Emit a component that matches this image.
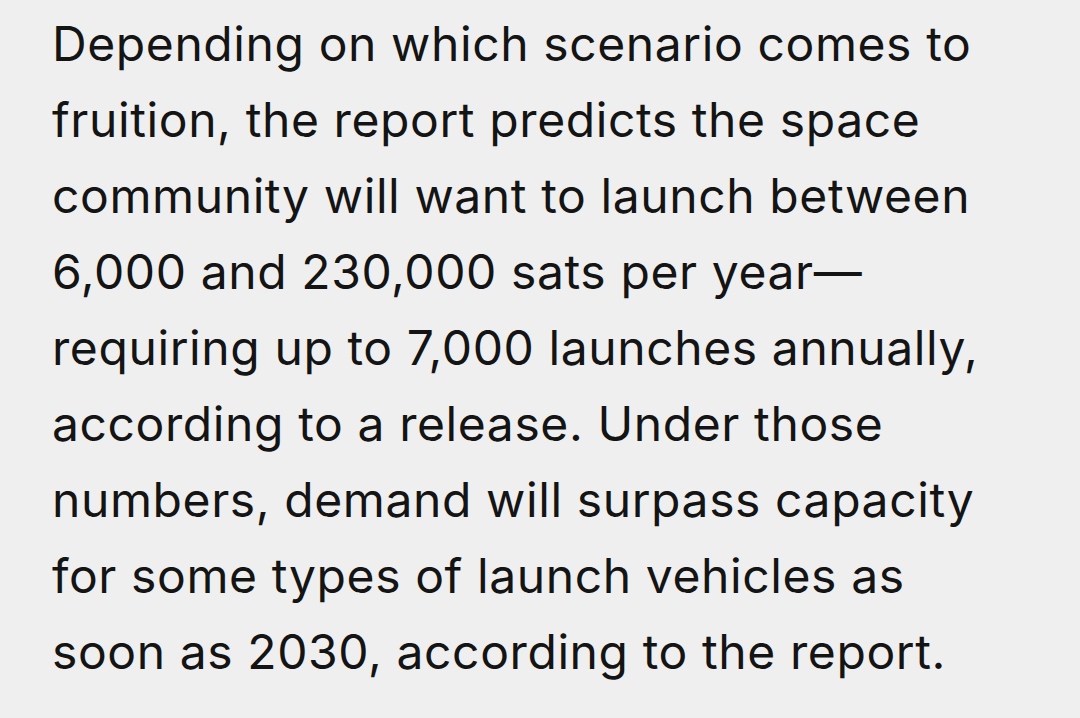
import React from "react";

const lines = [
  "Depending on which scenario comes to",
  "fruition, the report predicts the space",
  "community will want to launch between",
  "6,000 and 230,000 sats per year—",
  "requiring up to 7,000 launches annually,",
  "according to a release. Under those",
  "numbers, demand will surpass capacity",
  "for some types of launch vehicles as",
  "soon as 2030, according to the report.",
];

export default function App() {
  return (
    <div className="w-[1080px] h-[718px] bg-[#efefef] overflow-hidden">
      <p
        className="pl-[52px] pt-[6px] text-[48px] leading-[76px] tracking-[0.6px] text-[#141414]"
        style={{ fontFamily: "Inter, sans-serif" }}
      >
        {lines.map((l) => (
          <span key={l} className="block whitespace-nowrap">
            {l}
          </span>
        ))}
      </p>
    </div>
  );
}
